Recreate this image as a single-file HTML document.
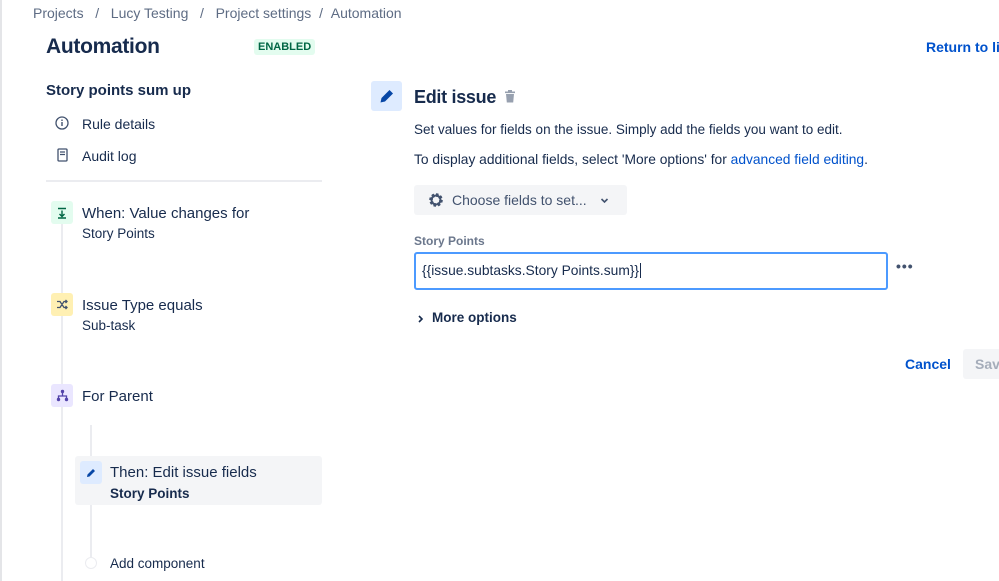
<!DOCTYPE html>
<html><head><meta charset="utf-8"><style>
*{margin:0;padding:0;box-sizing:border-box}
body{width:999px;height:581px;overflow:hidden;background:#fff;font-family:"Liberation Sans",sans-serif;color:#172b4d;position:relative}
.a{position:absolute;white-space:nowrap}
.ib{position:absolute;width:22px;height:23px;border-radius:3px;display:flex;align-items:center;justify-content:center}
</style></head><body>
<div class="a" style="left:0;top:0;width:2px;height:581px;background:#e4e5e8"></div>
<div class="a" style="left:33px;top:5px;font-size:14px;color:#5e6c84">Projects&nbsp;&nbsp;&nbsp;/&nbsp;&nbsp;&nbsp;Lucy Testing&nbsp;&nbsp;&nbsp;/&nbsp;&nbsp;&nbsp;Project settings&nbsp;&nbsp;/&nbsp;&nbsp;Automation</div>
<div class="a" style="left:46px;top:35px;font-size:21px;font-weight:700;letter-spacing:-0.3px">Automation</div>
<div class="a" style="left:254px;top:39px;height:16px;padding:0 4px;background:#e3fcef;color:#006644;font-size:11px;font-weight:700;line-height:16px;border-radius:3px">ENABLED</div>
<div class="a" style="left:926px;top:39px;font-size:14px;color:#0052cc;font-weight:600">Return to list</div>
<div class="a" style="left:46px;top:82px;font-size:15px;font-weight:700">Story points sum up</div>
<svg class="a" style="left:55px;top:116px" width="14" height="14" viewBox="0 0 14 14"><circle cx="7" cy="7" r="6" fill="none" stroke="#42526e" stroke-width="1.3"/><rect x="6.3" y="6" width="1.4" height="4" fill="#42526e"/><circle cx="7" cy="4.2" r=".8" fill="#42526e"/></svg>
<div class="a" style="left:82px;top:116px;font-size:14px">Rule details</div>
<svg class="a" style="left:57px;top:148px" width="11" height="14" viewBox="0 0 11 14"><rect x="1" y="1" width="9" height="12" rx="1" fill="none" stroke="#42526e" stroke-width="1.3"/><path d="M3 4h5M3 6.5h5" stroke="#42526e" stroke-width="1.2"/></svg>
<div class="a" style="left:82px;top:148px;font-size:14px">Audit log</div>
<div class="a" style="left:46px;top:180px;width:276px;height:2px;background:#ebecf0"></div>
<div class="a" style="left:61px;top:215px;width:2px;height:366px;background:#ebecf0"></div>
<div class="a" style="left:90px;top:425px;width:2px;height:140px;background:#ebecf0"></div>
<div class="ib" style="left:51px;top:201px;background:#e3fcef"><svg width="12" height="12" viewBox="0 0 12 12"><path d="M2 1.5h8M6 3.5v6M3.5 7l2.5 2.5L8.5 7M2 11h8" stroke="#006644" stroke-width="1.4" fill="none"/></svg></div>
<div class="a" style="left:82px;top:205px;font-size:15px">When: Value changes for</div>
<div class="a" style="left:82px;top:226px;font-size:13.5px">Story Points</div>
<div class="ib" style="left:51px;top:293px;background:#fff0b3"><svg width="13" height="11" viewBox="0 0 13 11"><path d="M1 2.5h3l4 6h3M1 8.5h3l4-6h3M9.5 1l1.5 1.5L9.5 4M9.5 7l1.5 1.5L9.5 10" stroke="#42526e" stroke-width="1.3" fill="none"/></svg></div>
<div class="a" style="left:82px;top:297px;font-size:15px">Issue Type equals</div>
<div class="a" style="left:82px;top:318px;font-size:13.5px">Sub-task</div>
<div class="ib" style="left:51px;top:384px;background:#eae6ff"><svg width="13" height="13" viewBox="0 0 13 13"><circle cx="6.5" cy="2.5" r="1.7" fill="#5243aa"/><circle cx="2.5" cy="10.5" r="1.7" fill="#5243aa"/><circle cx="10.5" cy="10.5" r="1.7" fill="#5243aa"/><path d="M6.5 4v3M2.5 9V7h8v2" stroke="#5243aa" stroke-width="1.3" fill="none"/></svg></div>
<div class="a" style="left:82px;top:388px;font-size:15px">For Parent</div>
<div class="a" style="left:75px;top:456px;width:247px;height:49px;background:#f4f5f7;border-radius:3px"></div>
<div class="ib" style="left:80px;top:461px;background:#deebff"><svg width="12" height="12" viewBox="0 0 12 12"><path d="M2 10l.5-2.5L8 2l2 2-5.5 5.5z" fill="#0747a6"/></svg></div>
<div class="a" style="left:110px;top:464px;font-size:15px">Then: Edit issue fields</div>
<div class="a" style="left:110px;top:486px;font-size:13.5px;font-weight:700">Story Points</div>
<div class="a" style="left:85px;top:557px;width:12px;height:12px;border-radius:50%;border:1.5px solid #ebecf0;background:#fff"></div>
<div class="a" style="left:110px;top:556px;font-size:13.5px">Add component</div>

<div class="a" style="left:371px;top:81px;width:31px;height:30px;background:#deebff;border-radius:3px;display:flex;align-items:center;justify-content:center"><svg width="16" height="16" viewBox="0 0 16 16"><path d="M1.5 14.5l1-4.5L10.5 2l3.5 3.5-8 8z" fill="#0747a6"/></svg></div>
<div class="a" style="left:414px;top:87px;font-size:18px;font-weight:700;letter-spacing:-0.3px">Edit issue</div>
<svg class="a" style="left:504px;top:90px" width="12" height="13" viewBox="0 0 12 13"><rect x="1" y="1.5" width="10" height="1.6" fill="#97a0af"/><rect x="4" y="0" width="4" height="2" fill="#97a0af"/><path d="M2 4h8l-.8 8.5H2.8z" fill="#97a0af"/></svg>
<div class="a" style="left:414px;top:122px;font-size:13.5px">Set values for fields on the issue. Simply add the fields you want to edit.</div>
<div class="a" style="left:414px;top:152px;font-size:13.8px">To display additional fields, select 'More options' for <span style="color:#0052cc">advanced field editing</span>.</div>
<div class="a" style="left:414px;top:185px;width:213px;height:30px;background:#f4f5f7;border-radius:3px"></div>
<svg class="a" style="left:428px;top:192px" width="16" height="16" viewBox="0 0 16 16"><circle cx="8" cy="8" r="5" fill="none" stroke="#42526e" stroke-width="3.6" stroke-dasharray="2.2 1.7"/><circle cx="8" cy="8" r="4.5" fill="none" stroke="#42526e" stroke-width="2"/></svg>
<div class="a" style="left:452px;top:192px;font-size:14px;color:#42526e">Choose fields to set...</div>
<svg class="a" style="left:600px;top:196px" width="9" height="9" viewBox="0 0 9 9"><path d="M1.5 3l3 3 3-3" stroke="#42526e" stroke-width="1.6" fill="none"/></svg>
<div class="a" style="left:414px;top:234px;font-size:12px;font-weight:700;color:#6b778c">Story Points</div>
<div class="a" style="left:414px;top:252px;width:474px;height:38px;border:2px solid #4c9aff;border-radius:3px"></div>
<div class="a" style="left:422px;top:263px;font-size:13.8px">{{issue.subtasks.Story Points.sum}}<span style="border-left:1px solid #172b4d;margin-left:1px"></span></div>
<div class="a" style="left:896px;top:258px;font-size:14px;color:#42526e;font-weight:700;letter-spacing:1px">•••</div>
<svg class="a" style="left:416px;top:314px" width="9" height="10" viewBox="0 0 9 10"><path d="M3 2l3 3-3 3" stroke="#172b4d" stroke-width="1.6" fill="none"/></svg>
<div class="a" style="left:432px;top:310px;font-size:13.5px;font-weight:700">More options</div>
<div class="a" style="left:905px;top:356px;font-size:14px;color:#0052cc;font-weight:600">Cancel</div>
<div class="a" style="left:963px;top:349px;width:60px;height:30px;background:#f4f5f7;border-radius:3px;color:#a5adba;font-size:14px;padding:7px 12px;font-weight:600">Save</div>
</body></html>
